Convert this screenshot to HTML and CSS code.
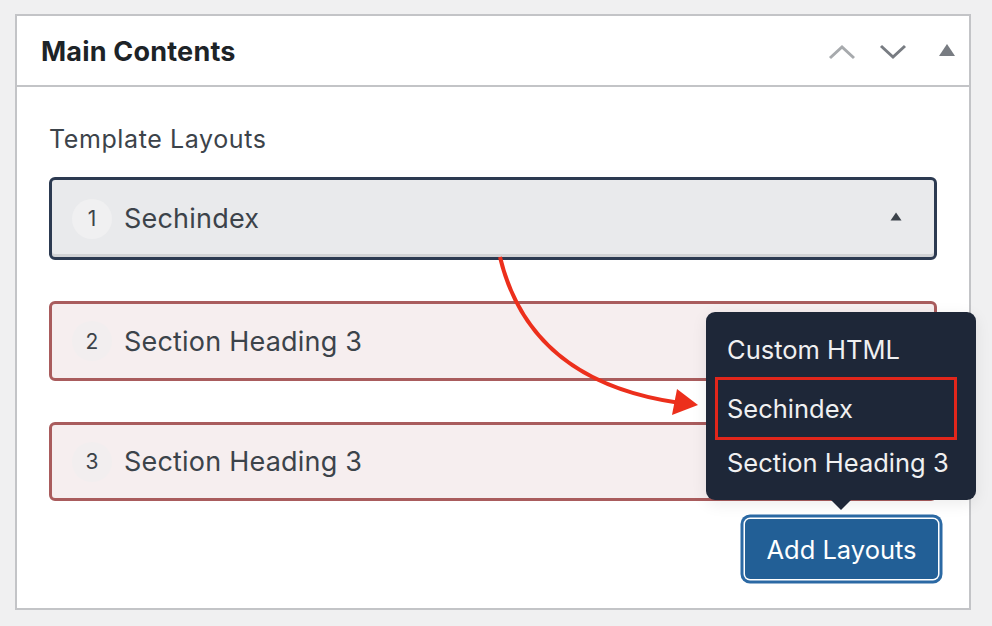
FILE: index.html
```html
<!DOCTYPE html>
<html>
<head>
<meta charset="utf-8">
<link rel="stylesheet" href="styles.css">
</head>
<body>
<div class="page">
  <section class="panel">
    <header class="panel-head">
      <h2 class="panel-title">Main Contents</h2>
      <div class="head-tools">
        <svg class="tool" width="28" height="18" viewBox="0 0 28 18"><path d="M2 15 L14 4 L26 15" fill="none" stroke="#a7aaad" stroke-width="3"/></svg>
        <svg class="tool" width="28" height="18" viewBox="0 0 28 18"><path d="M2 3 L14 14 L26 3" fill="none" stroke="#787c82" stroke-width="3"/></svg>
        <svg class="tool tri" width="18" height="14" viewBox="0 0 18 14"><path d="M1 13 L9 1 L17 13 Z" fill="#787c82"/></svg>
      </div>
    </header>
    <div class="panel-body">
      <div class="label">Template Layouts</div>
      <div class="layouts">
        <div class="layout active">
          <span class="num">1</span>
          <span class="name">Sechindex</span>
          <svg class="caret-up" width="12" height="9" viewBox="0 0 12 9"><path d="M0.5 8.5 L6 0.5 L11.5 8.5 Z" fill="#3c434a"/></svg>
        </div>
        <div class="layout error">
          <span class="num">2</span>
          <span class="name">Section Heading 3</span>
        </div>
        <div class="layout error">
          <span class="num">3</span>
          <span class="name">Section Heading 3</span>
        </div>
      </div>
      <div class="actions">
        <button class="add-btn">Add Layouts</button>
      </div>
    </div>
  </section>

  <div class="popup">
    <div class="popup-item">Custom HTML</div>
    <div class="popup-item selected">Sechindex</div>
    <div class="popup-item">Section Heading 3</div>
  </div>

  <svg class="annot" width="992" height="626" viewBox="0 0 992 626">
    <path d="M500 257 Q530 382 680 403" fill="none" stroke="#ec2f1c" stroke-width="4"/>
    <path d="M698 405 L677 389 L672 415 Z" fill="#ec2f1c"/>
  </svg>
</div>
</body>
</html>
```
FILE: styles.css
```css
* { box-sizing: border-box; }
html, body {
  margin: 0;
  padding: 0;
  background: #f0f0f1;
}
body {
  font-family: Inter, "Noto Sans", "Liberation Sans", sans-serif;
  color: #3c434a;
}
.page {
  position: relative;
  width: 992px;
  height: 626px;
  padding: 14px 0 0 15px;
}
.panel {
  width: 956px;
  height: 596px;
  background: #fff;
  border: 2px solid #c3c4c7;
  display: flex;
  flex-direction: column;
}
.panel-head {
  height: 71px;
  border-bottom: 2px solid #c3c4c7;
  display: flex;
  align-items: center;
  justify-content: space-between;
  padding: 0 13px 0 24px;
}
.panel-title {
  margin: 0;
  font-size: 27px;
  font-weight: 700;
  color: #1d2327;
  letter-spacing: 0.2px;
  padding-top: 2px;
}
.head-tools {
  display: flex;
  align-items: center;
  gap: 23px;
  padding-top: 2px;
}
.head-tools .tri { margin-left: 8px; margin-top: -4px; }
.panel-body {
  flex: 1;
  padding: 38px 32px 0 32px;
  display: flex;
  flex-direction: column;
}
.label {
  font-size: 25px;
  line-height: 28px;
  letter-spacing: 0.6px;
  color: #3c434a;
}
.layouts {
  margin-top: 24px;
  display: flex;
  flex-direction: column;
  gap: 41px;
}
.layout {
  height: 81px;
  border: 3px solid #2c3a51;
  border-radius: 6px;
  display: flex;
  align-items: center;
  padding: 0 32px 0 20px;
}
.layout.active {
  background: #e9eaec;
  box-shadow: inset 0 -3px 0 #d2d3d5;
  height: 83px;
}
.layout.error {
  height: 80px;
  border-color: #a95c5d;
  background: #f6eeef;
}
.layout.error + .layout.error { height: 79px; }
.num {
  width: 40px;
  height: 40px;
  border-radius: 50%;
  background: #f0f0f1;
  display: flex;
  align-items: center;
  justify-content: center;
  font-size: 21px;
  color: #3c434a;
}
.layout.error .num { background: #f2eeef; }
.name {
  margin-left: 12px;
  font-size: 27px;
  letter-spacing: 0.2px;
  color: #3c434a;
  flex: 1;
}
.caret-up { margin-top: -4px; }
.actions {
  margin-top: 18px;
  display: flex;
  justify-content: flex-end;
}
.add-btn {
  font-family: inherit;
  width: 193px;
  height: 60px;
  margin-right: -1px;
  border: none;
  border-radius: 5px;
  background: #225f96;
  color: #fff;
  font-size: 25.5px;
  box-shadow: 0 0 0 1.5px #fff, 0 0 0 4.5px #2b69a4;
}
.popup {
  position: absolute;
  left: 706px;
  top: 312px;
  width: 270px;
  height: 188px;
  background: #1e2738;
  border-radius: 9px;
  padding: 11px 9px;
  display: flex;
  flex-direction: column;
  box-shadow: 0 4px 16px rgba(0,0,0,0.08);
}
.popup::after {
  content: "";
  position: absolute;
  left: 125px;
  bottom: -10px;
  border-left: 10px solid transparent;
  border-right: 10px solid transparent;
  border-top: 10px solid #1e2738;
}
.popup-item {
  height: 56px;
  display: flex;
  align-items: center;
  padding-left: 9px;
  font-size: 25.5px;
  color: #f0f0f1;
  border: 3px solid transparent;
}
.popup-item.selected {
  border-color: #e2261b;
  height: 66px;
  margin: 0 0 -4px 0;
  width: 242px;
}
.annot {
  position: absolute;
  left: 0;
  top: 0;
  pointer-events: none;
}
```
